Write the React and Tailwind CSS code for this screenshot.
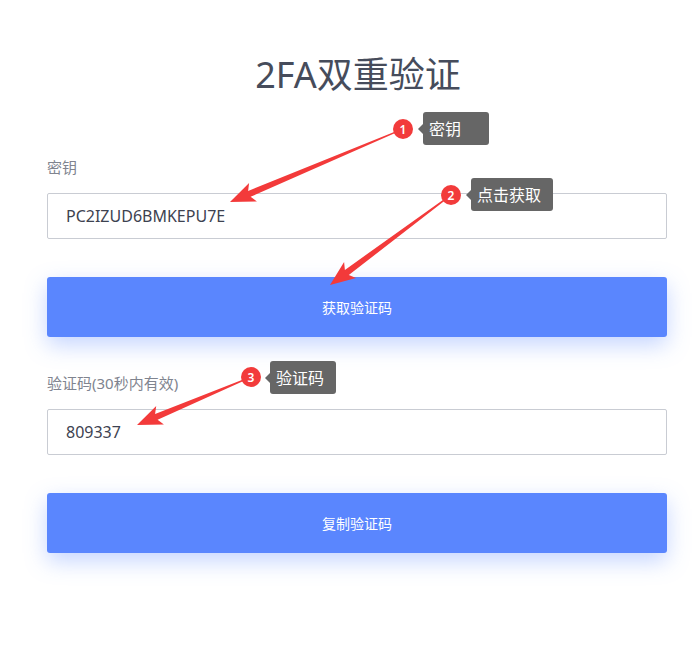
import React from 'react'

const font = { fontFamily: '"Noto Sans", "Noto Sans CJK SC", sans-serif' }

// tapered arrow: thin at the start, wide head at the tip
function arrowPath(x1, y1, x2, y2) {
  const dx = x2 - x1
  const dy = y2 - y1
  const len = Math.hypot(dx, dy)
  const ux = dx / len
  const uy = dy / len
  const nx = -uy
  const ny = ux
  const headLen = 25
  const bx = x2 - ux * headLen
  const by = y2 - uy * headLen
  const p = (x, y) => `${x.toFixed(1)},${y.toFixed(1)}`
  return [
    p(x1 + nx * 0.6, y1 + ny * 0.6),
    p(bx + ux * 4 + nx * 3.2, by + uy * 4 + ny * 3.2),
    p(bx + nx * 10, by + ny * 10),
    p(x2, y2),
    p(bx - nx * 10, by - ny * 10),
    p(bx + ux * 4 - nx * 3.2, by + uy * 4 - ny * 3.2),
    p(x1 - nx * 0.6, y1 - ny * 0.6),
  ].join(' ')
}

function Marker({ n, x, y }) {
  return (
    <g>
      <circle cx={x} cy={y} r="10" fill="#f23b3b" />
      <text x={x} y={y + 4.5} textAnchor="middle" fill="#fff" fontSize="12" fontWeight="600" fontFamily="'Noto Sans', sans-serif">{n}</text>
    </g>
  )
}

function Tip({ className, children }) {
  return (
    <div className={`absolute flex items-center h-[33px] px-[6px] rounded-[3px] bg-[#666666] text-white text-[16px] ${className}`}>
      <span className="absolute left-[-5px] top-1/2 -translate-y-1/2 w-0 h-0 border-y-[5px] border-y-transparent border-r-[5px] border-r-[#666666]" />
      {children}
    </div>
  )
}

export default function App() {
  return (
    <div className="relative w-[697px] h-[645px] bg-white overflow-hidden" style={font}>
      <div className="w-[620px] ml-[47px] pt-[48px] flex flex-col">
        <h1 className="text-[36px] leading-[54px] text-center text-[#464c5b] pl-[2px]">2FA双重验证</h1>

        <label className="mt-[55px] text-[15px] leading-[20px] text-[#80848f]">密钥</label>
        <div className="mt-[16px] h-[46px] border border-[#c9ccd3] rounded-[2px] flex items-center px-[18px] text-[16px] text-[#3d4250]">
          PC2IZUD6BMKEPU7E
        </div>
        <button className="mt-[38px] h-[60px] rounded-[3px] bg-[#5a86fe] text-white text-[14px] shadow-[0_8px_22px_rgba(90,134,254,0.35)]">
          获取验证码
        </button>

        <label className="mt-[36px] text-[15px] leading-[20px] text-[#80848f]">验证码(30秒内有效)</label>
        <div className="mt-[16px] h-[46px] border border-[#c9ccd3] rounded-[2px] flex items-center px-[18px] text-[16px] text-[#3d4250]">
          809337
        </div>
        <button className="mt-[38px] h-[60px] rounded-[3px] bg-[#5a86fe] text-white text-[14px] shadow-[0_8px_22px_rgba(90,134,254,0.35)]">
          复制验证码
        </button>
      </div>

      <svg className="absolute inset-0 pointer-events-none" width="697" height="645">
        <polygon points={arrowPath(403, 129, 230, 202)} fill="#f33a3a" />
        <polygon points={arrowPath(451, 195, 330, 285)} fill="#f33a3a" />
        <polygon points={arrowPath(251, 377, 137, 425)} fill="#f33a3a" />
        <Marker n="1" x={403} y={129} />
        <Marker n="2" x={451} y={195} />
        <Marker n="3" x={251} y={377} />
      </svg>

      <Tip className="left-[423px] top-[112px] w-[66px]">密钥</Tip>
      <Tip className="left-[471px] top-[178px] w-[82px]">点击获取</Tip>
      <Tip className="left-[270px] top-[361px] w-[66px]">验证码</Tip>
    </div>
  )
}
